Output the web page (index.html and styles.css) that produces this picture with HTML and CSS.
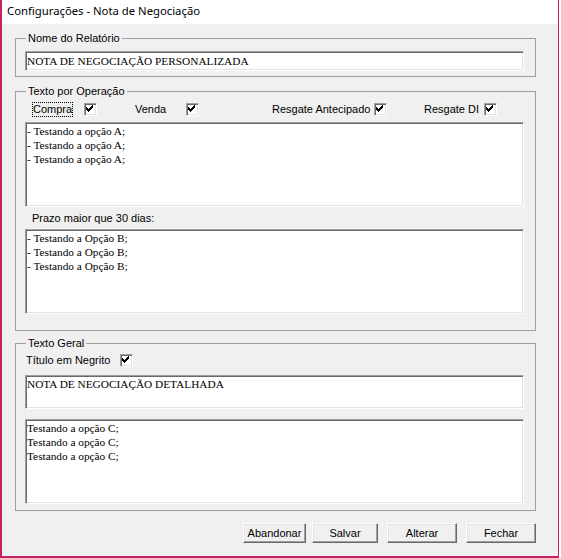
FILE: index.html
```html
<!DOCTYPE html>
<html lang="pt-BR">
<head>
<meta charset="utf-8">
<title>Configurações - Nota de Negociação</title>
<link rel="stylesheet" href="styles.css">
</head>
<body>
<div class="window">
  <div class="titlebar">Configurações - Nota de Negociação</div>
  <div class="client">
    <fieldset class="group group-name">
      <legend>Nome do Relatório</legend>
      <div class="edit">NOTA DE NEGOCIAÇÃO PERSONALIZADA</div>
    </fieldset>

    <fieldset class="group group-op">
      <legend>Texto por Operação</legend>
      <div class="check-row">
        <label class="check check-compra"><span class="caption focus">Compra</span><span class="box"><svg width="11" height="11" viewBox="0 0 11 11"><path d="M7 1h1v1h-1z M6 2h2v1h-2z M1 3h1v1h-1z M5 3h3v1h-3z M1 4h2v1h-2z M4 4h3v1h-3z M1 5h5v1h-5z M2 6h3v1h-3z M3 7h1v1h-1z"/></svg></span></label>
        <label class="check check-venda"><span class="caption">Venda</span><span class="box"><svg width="11" height="11" viewBox="0 0 11 11"><path d="M7 1h1v1h-1z M6 2h2v1h-2z M1 3h1v1h-1z M5 3h3v1h-3z M1 4h2v1h-2z M4 4h3v1h-3z M1 5h5v1h-5z M2 6h3v1h-3z M3 7h1v1h-1z"/></svg></span></label>
        <label class="check check-antecipado"><span class="caption">Resgate Antecipado</span><span class="box"><svg width="11" height="11" viewBox="0 0 11 11"><path d="M7 1h1v1h-1z M6 2h2v1h-2z M1 3h1v1h-1z M5 3h3v1h-3z M1 4h2v1h-2z M4 4h3v1h-3z M1 5h5v1h-5z M2 6h3v1h-3z M3 7h1v1h-1z"/></svg></span></label>
        <label class="check check-di"><span class="caption">Resgate DI</span><span class="box"><svg width="11" height="11" viewBox="0 0 11 11"><path d="M7 1h1v1h-1z M6 2h2v1h-2z M1 3h1v1h-1z M5 3h3v1h-3z M1 4h2v1h-2z M4 4h3v1h-3z M1 5h5v1h-5z M2 6h3v1h-3z M3 7h1v1h-1z"/></svg></span></label>
      </div>
      <textarea class="memo memo-a" readonly>- Testando a opção A;
- Testando a opção A;
- Testando a opção A;</textarea>
      <div class="field-label">Prazo maior que 30 dias:</div>
      <textarea class="memo memo-b" readonly>- Testando a Opção B;
- Testando a Opção B;
- Testando a Opção B;</textarea>
    </fieldset>

    <fieldset class="group group-general">
      <legend>Texto Geral</legend>
      <div class="check-row">
        <label class="check check-negrito"><span class="caption">Título em Negrito</span><span class="box"><svg width="11" height="11" viewBox="0 0 11 11"><path d="M7 1h1v1h-1z M6 2h2v1h-2z M1 3h1v1h-1z M5 3h3v1h-3z M1 4h2v1h-2z M4 4h3v1h-3z M1 5h5v1h-5z M2 6h3v1h-3z M3 7h1v1h-1z"/></svg></span></label>
      </div>
      <textarea class="memo memo-c" readonly>NOTA DE NEGOCIAÇÃO DETALHADA</textarea>
      <textarea class="memo memo-d" readonly>Testando a opção C;
Testando a opção C;
Testando a opção C;</textarea>
    </fieldset>

    <div class="buttons">
      <button class="btn btn-abandonar">Abandonar</button>
      <button class="btn btn-salvar">Salvar</button>
      <button class="btn btn-alterar">Alterar</button>
      <button class="btn btn-fechar">Fechar</button>
    </div>
  </div>
</div>
</body>
</html>
```

FILE: styles.css
```css
html, body {
  margin: 0;
  padding: 0;
  background: #ffffff;
}

.window {
  width: 559px;
  height: 558px;
  box-sizing: border-box;
  border-left: 2px solid #c1245f;
  border-right: 1px solid #c1245f;
  border-bottom: 2px solid #c1245f;
  background: #f0f0f0;
  display: flex;
  flex-direction: column;
  font: 11px/13px "Liberation Sans", Arial, sans-serif;
  color: #000;
}

.titlebar {
  height: 24px;
  flex: none;
  background: #ffffff;
  padding-left: 5px;
  font: 11.3px/21px "Noto Sans", "Open Sans", sans-serif;
  color: #000;
}

.client {
  display: flex;
  flex-direction: column;
}

/* group boxes */
.group {
  margin: 0 22px 0 13px;
  border: 1px solid #a0a0a0;
  min-width: 0;
}

.group legend {
  padding: 0 2px;
  margin-left: 1px;
  font-size: 11px;
  line-height: 13px;
}

.group-name {
  margin-top: 8px;
  padding: 6px 11px 5px 9px;
}

.group-op {
  margin-top: 8px;
  padding: 4px 11px 16px 9px;
}

.group-general {
  margin-top: 6px;
  padding: 3px 11px 6px 9px;
}

/* sunken edit boxes */
.edit,
.memo {
  display: block;
  box-sizing: border-box;
  width: 100%;
  margin: 0;
  border: 1px solid;
  border-color: #a0a0a0 #ffffff #ffffff #a0a0a0;
  box-shadow: inset 1px 1px 0 #696969, inset -1px -1px 0 #e3e3e3;
  background: #ffffff;
  color: #000;
  font-family: "Liberation Serif", "Times New Roman", serif;
  font-size: 11.3px;
}

.edit {
  height: 20px;
  line-height: 16px;
  padding: 1px 1px;
  white-space: nowrap;
}

.memo {
  line-height: 14px;
  padding: 1px 0 0 1px;
  resize: none;
  overflow: hidden;
  outline: none;
}

.memo-a { margin-top: 5px; height: 85px; }
.memo-b { margin-top: 4px; height: 85px; }
.memo-c { margin-top: 7px; height: 34px; }
.memo-d { margin-top: 10px; height: 85px; }

.field-label {
  margin: 5px 0 0 7px;
  line-height: 13px;
}

/* check boxes: caption on the left, box on the right */
.check-row {
  display: flex;
  align-items: center;
  height: 15px;
}

.check {
  display: flex;
  align-items: center;
  justify-content: space-between;
  height: 15px;
}

.check-compra { width: 65px; margin-left: 7px; }
.check-venda { width: 64px; margin-left: 38px; }
.check-antecipado { width: 115px; margin-left: 73px; }
.check-di { width: 73px; margin-left: 37px; }
.check-negrito { width: 107px; margin-left: 1px; }

.caption {
  line-height: 13px;
  white-space: nowrap;
}

.caption.focus {
  border: 1px dotted #000;
  padding: 0;
}

.box {
  width: 13px;
  height: 13px;
  flex: none;
  box-sizing: border-box;
  border: 1px solid;
  border-color: #a0a0a0 #ffffff #ffffff #a0a0a0;
  box-shadow: inset 1px 1px 0 #696969, inset -1px -1px 0 #e3e3e3;
  background: #ffffff;
}

.box svg {
  display: block;
  shape-rendering: crispEdges;
  fill: #000;
}

/* push buttons */
.buttons {
  display: flex;
  justify-content: flex-end;
  margin: 12px 22px 0 0;
}

.btn {
  height: 20px;
  box-sizing: border-box;
  padding: 0;
  margin: 0;
  border: 1px solid;
  border-color: #ffffff #696969 #696969 #ffffff;
  box-shadow: inset -1px -1px 0 #a0a0a0, inset 1px 1px 0 #e3e3e3;
  background: #f0f0f0;
  color: #000;
  font: 11px/16px "Liberation Sans", Arial, sans-serif;
  border-radius: 0;
}

.btn-abandonar { width: 63px; }
.btn-salvar { width: 66px; margin-left: 6px; }
.btn-alterar { width: 70px; margin-left: 9px; }
.btn-fechar { width: 70px; margin-left: 9px; }
```
